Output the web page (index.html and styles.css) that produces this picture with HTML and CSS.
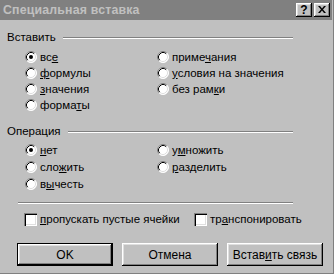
FILE: index.html
```html
<!DOCTYPE html>
<html>
<head>
<meta charset="utf-8">
<link rel="stylesheet" href="styles.css">
</head>
<body>
<div class="window">
  <div class="titlebar">
    <span class="title">Специальная вставка</span>
    <div class="tbtns">
      <span class="tbtn">?</span>
      <span class="tbtn x">
        <svg width="8" height="7" viewBox="0 0 8 7"><path d="M0 0h2l2 2.5L6 0h2L5 3.5 8 7H6L4 4.5 2 7H0l3-3.5z" fill="#000"/></svg>
      </span>
    </div>
  </div>
  <div class="body">
    <div class="legend legend1"><span>Вставить</span><div class="etch"></div></div>
    <div class="options opts1">
      <label class="opt"><svg class="radio" viewBox="0 0 12 12"><circle cx="6" cy="6" r="5.5" fill="#fff"/><path d="M9.89 2.11A5.5 5.5 0 0 0 2.11 9.89" stroke="#808080" fill="none"/><path d="M9.18 2.82A4.5 4.5 0 0 0 2.82 9.18" stroke="#000" fill="none"/><path d="M2.11 9.89A5.5 5.5 0 0 0 9.89 2.11" stroke="#fff" fill="none"/><path d="M2.82 9.18A4.5 4.5 0 0 0 9.18 2.82" stroke="#dfdfdf" fill="none"/><circle cx="6" cy="6" r="2" fill="#000"/></svg><span>вс<u>е</u></span></label>
      <label class="opt"><svg class="radio" viewBox="0 0 12 12"><circle cx="6" cy="6" r="5.5" fill="#fff"/><path d="M9.89 2.11A5.5 5.5 0 0 0 2.11 9.89" stroke="#808080" fill="none"/><path d="M9.18 2.82A4.5 4.5 0 0 0 2.82 9.18" stroke="#000" fill="none"/><path d="M2.11 9.89A5.5 5.5 0 0 0 9.89 2.11" stroke="#fff" fill="none"/><path d="M2.82 9.18A4.5 4.5 0 0 0 9.18 2.82" stroke="#dfdfdf" fill="none"/></svg><span>приме<u>ч</u>ания</span></label>
      <label class="opt"><svg class="radio" viewBox="0 0 12 12"><circle cx="6" cy="6" r="5.5" fill="#fff"/><path d="M9.89 2.11A5.5 5.5 0 0 0 2.11 9.89" stroke="#808080" fill="none"/><path d="M9.18 2.82A4.5 4.5 0 0 0 2.82 9.18" stroke="#000" fill="none"/><path d="M2.11 9.89A5.5 5.5 0 0 0 9.89 2.11" stroke="#fff" fill="none"/><path d="M2.82 9.18A4.5 4.5 0 0 0 9.18 2.82" stroke="#dfdfdf" fill="none"/></svg><span><u>ф</u>ормулы</span></label>
      <label class="opt"><svg class="radio" viewBox="0 0 12 12"><circle cx="6" cy="6" r="5.5" fill="#fff"/><path d="M9.89 2.11A5.5 5.5 0 0 0 2.11 9.89" stroke="#808080" fill="none"/><path d="M9.18 2.82A4.5 4.5 0 0 0 2.82 9.18" stroke="#000" fill="none"/><path d="M2.11 9.89A5.5 5.5 0 0 0 9.89 2.11" stroke="#fff" fill="none"/><path d="M2.82 9.18A4.5 4.5 0 0 0 9.18 2.82" stroke="#dfdfdf" fill="none"/></svg><span><u>у</u>словия на значения</span></label>
      <label class="opt"><svg class="radio" viewBox="0 0 12 12"><circle cx="6" cy="6" r="5.5" fill="#fff"/><path d="M9.89 2.11A5.5 5.5 0 0 0 2.11 9.89" stroke="#808080" fill="none"/><path d="M9.18 2.82A4.5 4.5 0 0 0 2.82 9.18" stroke="#000" fill="none"/><path d="M2.11 9.89A5.5 5.5 0 0 0 9.89 2.11" stroke="#fff" fill="none"/><path d="M2.82 9.18A4.5 4.5 0 0 0 9.18 2.82" stroke="#dfdfdf" fill="none"/></svg><span><u>з</u>начения</span></label>
      <label class="opt"><svg class="radio" viewBox="0 0 12 12"><circle cx="6" cy="6" r="5.5" fill="#fff"/><path d="M9.89 2.11A5.5 5.5 0 0 0 2.11 9.89" stroke="#808080" fill="none"/><path d="M9.18 2.82A4.5 4.5 0 0 0 2.82 9.18" stroke="#000" fill="none"/><path d="M2.11 9.89A5.5 5.5 0 0 0 9.89 2.11" stroke="#fff" fill="none"/><path d="M2.82 9.18A4.5 4.5 0 0 0 9.18 2.82" stroke="#dfdfdf" fill="none"/></svg><span>без рам<u>к</u>и</span></label>
      <label class="opt"><svg class="radio" viewBox="0 0 12 12"><circle cx="6" cy="6" r="5.5" fill="#fff"/><path d="M9.89 2.11A5.5 5.5 0 0 0 2.11 9.89" stroke="#808080" fill="none"/><path d="M9.18 2.82A4.5 4.5 0 0 0 2.82 9.18" stroke="#000" fill="none"/><path d="M2.11 9.89A5.5 5.5 0 0 0 9.89 2.11" stroke="#fff" fill="none"/><path d="M2.82 9.18A4.5 4.5 0 0 0 9.18 2.82" stroke="#dfdfdf" fill="none"/></svg><span>форма<u>т</u>ы</span></label>
    </div>

    <div class="legend legend2"><span>Операция</span><div class="etch"></div></div>
    <div class="options opts2">
      <label class="opt"><svg class="radio" viewBox="0 0 12 12"><circle cx="6" cy="6" r="5.5" fill="#fff"/><path d="M9.89 2.11A5.5 5.5 0 0 0 2.11 9.89" stroke="#808080" fill="none"/><path d="M9.18 2.82A4.5 4.5 0 0 0 2.82 9.18" stroke="#000" fill="none"/><path d="M2.11 9.89A5.5 5.5 0 0 0 9.89 2.11" stroke="#fff" fill="none"/><path d="M2.82 9.18A4.5 4.5 0 0 0 9.18 2.82" stroke="#dfdfdf" fill="none"/><circle cx="6" cy="6" r="2" fill="#000"/></svg><span><u>н</u>ет</span></label>
      <label class="opt"><svg class="radio" viewBox="0 0 12 12"><circle cx="6" cy="6" r="5.5" fill="#fff"/><path d="M9.89 2.11A5.5 5.5 0 0 0 2.11 9.89" stroke="#808080" fill="none"/><path d="M9.18 2.82A4.5 4.5 0 0 0 2.82 9.18" stroke="#000" fill="none"/><path d="M2.11 9.89A5.5 5.5 0 0 0 9.89 2.11" stroke="#fff" fill="none"/><path d="M2.82 9.18A4.5 4.5 0 0 0 9.18 2.82" stroke="#dfdfdf" fill="none"/></svg><span>у<u>м</u>ножить</span></label>
      <label class="opt"><svg class="radio" viewBox="0 0 12 12"><circle cx="6" cy="6" r="5.5" fill="#fff"/><path d="M9.89 2.11A5.5 5.5 0 0 0 2.11 9.89" stroke="#808080" fill="none"/><path d="M9.18 2.82A4.5 4.5 0 0 0 2.82 9.18" stroke="#000" fill="none"/><path d="M2.11 9.89A5.5 5.5 0 0 0 9.89 2.11" stroke="#fff" fill="none"/><path d="M2.82 9.18A4.5 4.5 0 0 0 9.18 2.82" stroke="#dfdfdf" fill="none"/></svg><span>сло<u>ж</u>ить</span></label>
      <label class="opt"><svg class="radio" viewBox="0 0 12 12"><circle cx="6" cy="6" r="5.5" fill="#fff"/><path d="M9.89 2.11A5.5 5.5 0 0 0 2.11 9.89" stroke="#808080" fill="none"/><path d="M9.18 2.82A4.5 4.5 0 0 0 2.82 9.18" stroke="#000" fill="none"/><path d="M2.11 9.89A5.5 5.5 0 0 0 9.89 2.11" stroke="#fff" fill="none"/><path d="M2.82 9.18A4.5 4.5 0 0 0 9.18 2.82" stroke="#dfdfdf" fill="none"/></svg><span><u>р</u>азделить</span></label>
      <label class="opt"><svg class="radio" viewBox="0 0 12 12"><circle cx="6" cy="6" r="5.5" fill="#fff"/><path d="M9.89 2.11A5.5 5.5 0 0 0 2.11 9.89" stroke="#808080" fill="none"/><path d="M9.18 2.82A4.5 4.5 0 0 0 2.82 9.18" stroke="#000" fill="none"/><path d="M2.11 9.89A5.5 5.5 0 0 0 9.89 2.11" stroke="#fff" fill="none"/><path d="M2.82 9.18A4.5 4.5 0 0 0 9.18 2.82" stroke="#dfdfdf" fill="none"/></svg><span>в<u>ы</u>честь</span></label>
    </div>

    <div class="sep etch"></div>

    <div class="checks">
      <label class="chk chk1"><span class="box"></span><span><u>п</u>ропускать пустые ячейки</span></label>
      <label class="chk chk2"><span class="box"></span><span>тр<u>а</u>нспонировать</span></label>
    </div>

    <div class="buttons">
      <div class="btn default"><span>OK</span></div>
      <div class="btn"><span>Отмена</span></div>
      <div class="btn"><span>Встав<u>и</u>ть связь</span></div>
    </div>
  </div>
</div>
</body>
</html>
```

FILE: styles.css
```css
* { box-sizing: border-box; }
html, body { margin: 0; padding: 0; background: #c0c0c0; }
body { font-family: "Liberation Sans", Arial, sans-serif; font-size: 11.5px; color: #000; }

.window {
  width: 334px;
  height: 274px;
  background: #c0c0c0;
  border-right: 1px solid #808080;
  border-bottom: 1px solid #808080;
  padding-right: 1px;
  padding-bottom: 1px;
  overflow: hidden;
}

.titlebar {
  height: 20px;
  background: #808080;
  display: flex;
  align-items: center;
  justify-content: space-between;
  padding: 0 2px 0 3px;
}
.title {
  color: #c0c0c0;
  font-weight: bold;
  font-size: 12.3px;
  letter-spacing: 0.2px;
}
.tbtns { display: flex; gap: 2px; }
.tbtn {
  width: 16px;
  height: 14px;
  background: #c0c0c0;
  box-shadow: inset -1px -1px #000, inset 1px 1px #fff, inset -2px -2px #808080, inset 2px 2px #dfdfdf;
  display: flex;
  align-items: center;
  justify-content: center;
  font-weight: bold;
  font-size: 12px;
  line-height: 14px;
  padding-bottom: 1px;
}
.tbtn.x svg { display: block; }

.body { padding: 0 0 0 7px; }

.legend {
  display: flex;
  align-items: center;
  width: 286px;
  height: 14px;
  line-height: 14px;
}
.legend1 { margin-top: 10px; }
.legend2 { margin-top: 11px; }
.legend .etch { flex: 1; margin-left: 7px; margin-top: 1px; }
.etch {
  height: 2px;
  border-top: 1px solid #808080;
  border-bottom: 1px solid #fff;
}

.options {
  display: grid;
  grid-template-columns: 132px auto;
  padding-left: 18px;
  margin-top: 5px;
}
.opts1 { grid-auto-rows: 16px; }
.opts2 { grid-auto-rows: 17px; margin-top: 3px; }
.opt {
  display: flex;
  align-items: center;
  gap: 3px;
  white-space: nowrap;
}
.radio { width: 12px; height: 12px; flex: none; }

u { text-decoration: underline; text-underline-offset: 1px; }

.sep { width: 275px; margin: 10px 0 0 11px; }

.checks {
  display: flex;
  margin-top: 7px;
  padding-left: 17px;
  height: 16px;
}
.chk { display: flex; align-items: center; gap: 3px; white-space: nowrap; }
.chk1 { width: 170px; }
.box {
  width: 13px;
  height: 13px;
  background: #fff;
  box-shadow: inset 1px 1px #808080, inset 2px 2px #000, inset -1px -1px #fff, inset -2px -2px #dfdfdf;
  flex: none;
}

.buttons {
  display: flex;
  gap: 9px;
  margin-top: 16px;
  padding-left: 10px;
  font-size: 12px;
}
.btn {
  width: 96px;
  height: 23px;
  background: #c0c0c0;
  display: flex;
  align-items: center;
  justify-content: center;
  box-shadow: inset -1px -1px #000, inset 1px 1px #fff, inset -2px -2px #808080, inset 2px 2px #dfdfdf;
}
.btn.default {
  border: 1px solid #000;
}
```
